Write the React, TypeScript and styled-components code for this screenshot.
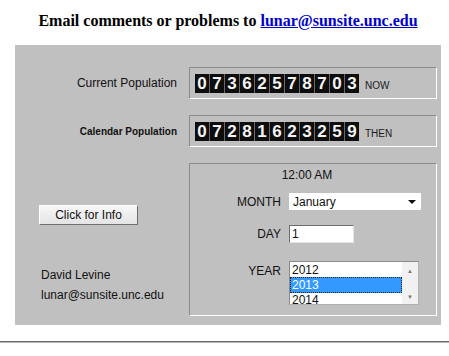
import styled, { createGlobalStyle } from "styled-components";

const GlobalStyle = createGlobalStyle`
  body {
    margin: 0;
    background: #ffffff;
    font-family: "Liberation Sans", Arial, sans-serif;
  }
`;

const currentDigits = "07362578703".split("");
const calendarDigits = "07281623259".split("");

export default function App() {
  return (
    <Page>
      <GlobalStyle />
      <Title>
        Email comments or problems to{" "}
        <MailLink href="#">lunar@sunsite.unc.edu</MailLink>
      </Title>
      <Panel>
        <RowLabel size={12}>Current Population</RowLabel>
        <CounterBox>
          <DigitStrip>
            {currentDigits.map((d, i) => (
              <Digit key={i}>{d}</Digit>
            ))}
          </DigitStrip>
          <Suffix>NOW</Suffix>
        </CounterBox>

        <RowLabel size={10} bold>
          Calendar Population
        </RowLabel>
        <CounterBox>
          <DigitStrip>
            {calendarDigits.map((d, i) => (
              <Digit key={i}>{d}</Digit>
            ))}
          </DigitStrip>
          <Suffix>THEN</Suffix>
        </CounterBox>

        <InfoColumn>
          <InfoButton>Click for Info</InfoButton>
          <Credits>
            <div>David Levine</div>
            <div>lunar@sunsite.unc.edu</div>
          </Credits>
        </InfoColumn>
        <DateBox>
          <TimeText>12:00 AM</TimeText>
          <FieldRow gapTop={11}>
            <FieldLabel>MONTH</FieldLabel>
            <SelectBox>
              <span>January</span>
              <DropArrow />
            </SelectBox>
          </FieldRow>
          <FieldRow gapTop={15}>
            <FieldLabel>DAY</FieldLabel>
            <DayInput defaultValue="1" />
          </FieldRow>
          <FieldRow gapTop={18} top>
            <FieldLabel top>YEAR</FieldLabel>
            <ListBox>
              <ListItems>
                <ListItem>2012</ListItem>
                <ListItem selected>2013</ListItem>
                <ListItem>2014</ListItem>
              </ListItems>
              <ScrollTrack>
                <ScrollArrow>▲</ScrollArrow>
                <ScrollArrow>▼</ScrollArrow>
              </ScrollTrack>
            </ListBox>
          </FieldRow>
        </DateBox>
      </Panel>
      <Rule />
    </Page>
  );
}

const Page = styled.div`
  width: 449px;
  height: 356px;
  overflow: hidden;
`;

const Title = styled.div`
  padding: 12px 0 0 7px;
  height: 18px;
  text-align: center;
  font-family: "Liberation Serif", "Times New Roman", serif;
  font-weight: bold;
  font-size: 16px;
  line-height: 18px;
  color: #000;
`;

const MailLink = styled.a`
  color: #0000cc;
  text-decoration: underline;
`;

const Panel = styled.div`
  margin: 15px 8px 0 15px;
  background: #c0c0c0;
  display: grid;
  grid-template-columns: 1fr 248px;
  grid-template-rows: 32px 32px 153px;
  column-gap: 12px;
  row-gap: 16px;
  padding: 22px 4px 9px 0;
`;

const RowLabel = styled.div<{ size: number; bold?: boolean }>`
  display: flex;
  align-items: center;
  justify-content: flex-end;
  font-size: ${(p) => p.size}px;
  font-weight: ${(p) => (p.bold ? "bold" : "normal")};
  color: #111;
`;

const CounterBox = styled.div`
  display: flex;
  align-items: center;
  padding-left: 5px;
  border-top: 1px solid #8c8c8c;
  border-left: 1px solid #8c8c8c;
  border-bottom: 1px solid #ffffff;
  border-right: 1px solid #ffffff;
`;

const DigitStrip = styled.div`
  display: flex;
  gap: 1px;
  background: #6a6a6a;
`;

const Digit = styled.div`
  width: 14px;
  height: 19px;
  background: #0e0e0e;
  color: #f4f4f4;
  font-size: 17px;
  font-weight: bold;
  line-height: 19px;
  text-align: center;
`;

const Suffix = styled.span`
  margin: 5px 0 0 6px;
  font-size: 10px;
  color: #1a1a1a;
`;

const InfoColumn = styled.div`
  display: flex;
  flex-direction: column;
  align-items: flex-start;
  padding: 42px 0 0 24px;
`;

const InfoButton = styled.button`
  width: 99px;
  height: 20px;
  padding: 0;
  font-family: "Liberation Sans", Arial, sans-serif;
  font-size: 12px;
  color: #111;
  background: linear-gradient(#f7f7f7, #e4e4e4);
  border: 1px solid;
  border-color: #ffffff #6e6e6e #6e6e6e #ffffff;
`;

const Credits = styled.div`
  margin: 40px 0 0 2px;
  font-size: 12px;
  line-height: 20px;
  color: #111;
`;

const DateBox = styled.div`
  display: flex;
  flex-direction: column;
  border-top: 1px solid #8c8c8c;
  border-left: 1px solid #8c8c8c;
  border-bottom: 1px solid #ffffff;
  border-right: 1px solid #ffffff;
`;

const TimeText = styled.div`
  margin-top: 4px;
  padding-right: 12px;
  height: 14px;
  line-height: 14px;
  text-align: center;
  font-size: 12px;
  color: #111;
`;

const FieldRow = styled.div<{ gapTop: number; top?: boolean }>`
  display: grid;
  grid-template-columns: 91px auto;
  column-gap: 8px;
  align-items: ${(p) => (p.top ? "start" : "center")};
  margin-top: ${(p) => p.gapTop}px;
`;

const FieldLabel = styled.div<{ top?: boolean }>`
  text-align: right;
  font-size: 12px;
  line-height: 14px;
  color: #111;
  padding-top: ${(p) => (p.top ? "3px" : "0")};
`;

const SelectBox = styled.div`
  width: 132px;
  height: 17px;
  box-sizing: border-box;
  background: #ffffff;
  display: flex;
  align-items: center;
  justify-content: space-between;
  padding: 0 5px 0 4px;
  font-size: 12px;
  color: #111;
`;

const DropArrow = styled.span`
  width: 0;
  height: 0;
  border-left: 4px solid transparent;
  border-right: 4px solid transparent;
  border-top: 4px solid #111;
`;

const DayInput = styled.input`
  width: 65px;
  height: 18px;
  box-sizing: border-box;
  padding: 0 2px;
  font-family: "Liberation Sans", Arial, sans-serif;
  font-size: 12px;
  color: #111;
  background: #fff;
  border: 1px solid;
  border-color: #6e6e6e #e6e6e6 #e6e6e6 #6e6e6e;
  outline: none;
`;

const ListBox = styled.div`
  width: 130px;
  height: 44px;
  box-sizing: border-box;
  display: flex;
  background: #fff;
  border: 1px solid;
  border-color: #8a8a8a #b0b0b0 #b0b0b0 #8a8a8a;
  overflow: hidden;
`;

const ListItems = styled.div`
  flex: 1;
  padding-top: 1px;
`;

const ListItem = styled.div<{ selected?: boolean }>`
  height: 14px;
  line-height: 14px;
  padding-left: 1px;
  font-size: 12px;
  color: ${(p) => (p.selected ? "#fff" : "#111")};
  background: ${(p) => (p.selected ? "#3399ff" : "transparent")};
  border: 1px dotted ${(p) => (p.selected ? "#222" : "transparent")};
  border-width: ${(p) => (p.selected ? "1px" : "0 1px")};
`;

const ScrollTrack = styled.div`
  width: 16px;
  background: #f1f1f1;
  display: flex;
  flex-direction: column;
  justify-content: space-between;
  align-items: center;
  padding: 5px 0 3px;
`;

const ScrollArrow = styled.span`
  font-size: 6px;
  line-height: 8px;
  color: #777;
`;

const Rule = styled.div`
  margin-top: 16px;
  height: 1px;
  border-top: 1px solid #6a6a6a;
  background: #b8b8b8;
`;
